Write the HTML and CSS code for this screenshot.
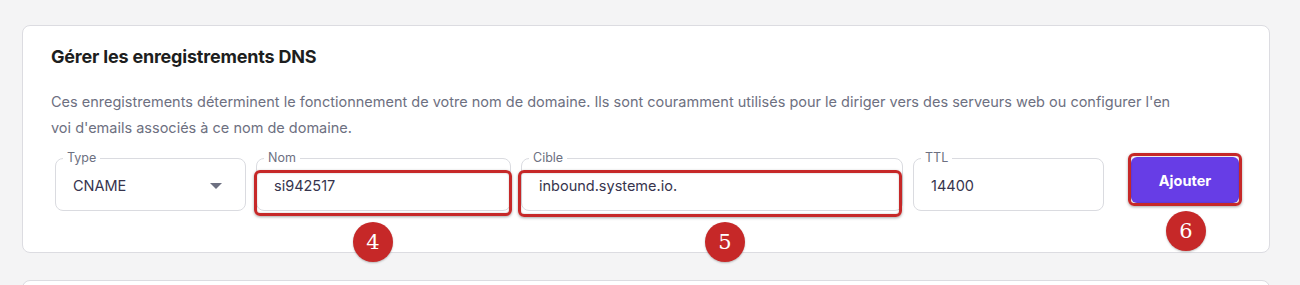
FILE: index.html
```html
<!DOCTYPE html>
<html lang="fr">
<head>
  <meta charset="UTF-8">
  <title>Gérer les enregistrements DNS</title>
  <link rel="stylesheet" href="styles.css">
</head>
<body>

<div class="page">
  <div class="card">
    <h2>Gérer les enregistrements DNS</h2>
    <p class="desc">Ces enregistrements déterminent le fonctionnement de votre nom de domaine. Ils sont couramment utilisés pour le diriger vers des serveurs web ou configurer l'en<br>voi d'emails associés à ce nom de domaine.</p>

    <div class="fields">
      <fieldset class="field field-type">
        <legend>Type</legend>
        <span class="value">CNAME</span>
        <span class="caret"></span>
      </fieldset>

      <fieldset class="field field-name">
        <legend>Nom</legend>
        <span class="value">si942517</span>
        <div class="mark mark-name"></div>
        <div class="step step-4">4</div>
      </fieldset>

      <fieldset class="field field-target">
        <legend>Cible</legend>
        <span class="value">inbound.systeme.io.</span>
        <div class="mark mark-target"></div>
        <div class="step step-5">5</div>
      </fieldset>

      <fieldset class="field field-ttl">
        <legend>TTL</legend>
        <span class="value">14400</span>
      </fieldset>

      <div class="btn-wrap">
        <button class="btn">Ajouter</button>
        <div class="mark mark-btn"></div>
        <div class="step step-6">6</div>
      </div>
    </div>
  </div>

  <div class="card card-next"></div>
</div>

</body>
</html>
```

FILE: styles.css
```css
body {
  margin: 0;
  font-family: Inter, "Noto Sans", sans-serif;
  background: #f4f4f5;
  color: #1d1e20;
}

.page {
  padding: 25px 30px 0 22px;
}

.card {
  background: #fff;
  border: 1px solid #dcdce1;
  border-radius: 8px;
  padding: 19px 28px 0;
  height: 207px;
}

.card-next {
  margin-top: 27px;
  height: 40px;
  padding: 0;
}

h2 {
  margin: 0;
  font-size: 18px;
  line-height: 24px;
  font-weight: 700;
  letter-spacing: -0.2px;
}

.desc {
  margin: 20px 0 0;
  font-size: 14.5px;
  line-height: 26px;
  color: #6d7081;
}

.fields {
  display: flex;
  align-items: flex-start;
  gap: 10px;
  margin-top: 11px;
  padding-left: 4px;
}

.field {
  position: relative;
  margin: 0;
  padding: 0 17px;
  height: 59px;
  border: 1px solid #dadbe0;
  border-radius: 8px;
  display: flex;
  align-items: center;
  box-sizing: border-box;
  min-width: 0;
}

.field legend {
  font-size: 12.5px;
  line-height: 12px;
  color: #6d7081;
  padding: 0 4px;
  margin-left: -10px;
}

.field-type { width: 191px; }
.field-name { width: 255px; }
.field-target { width: 382px; }
.field-ttl { width: 191px; }

.value {
  font-size: 14.5px;
  color: #36344d;
  margin-top: -3px;
}

.caret {
  margin-left: auto;
  margin-right: 6px;
  margin-top: -3px;
  width: 0;
  height: 0;
  border-left: 6px solid transparent;
  border-right: 6px solid transparent;
  border-top: 6px solid #6d7081;
}

.btn-wrap {
  position: relative;
  margin-left: 17px;
  margin-top: 5px;
}

.btn {
  display: block;
  width: 108px;
  height: 46px;
  border: none;
  border-radius: 6px;
  background: #673de6;
  color: #fff;
  font-family: Inter, "Noto Sans", sans-serif;
  font-size: 14.5px;
  font-weight: 700;
}

/* annotation overlays */
.mark {
  position: absolute;
  border: 3px solid #c62828;
  border-radius: 6px;
  box-shadow: 0 1px 3px rgba(0, 0, 0, 0.35), inset 0 0 2px rgba(0, 0, 0, 0.25);
  box-sizing: border-box;
  pointer-events: none;
}

.mark-name {
  left: -3px;
  top: 6px;
  width: 258px;
  height: 46px;
}

.mark-target {
  left: -4px;
  top: 6px;
  width: 384px;
  height: 47px;
}

.mark-btn {
  left: -3px;
  top: -4px;
  width: 114px;
  height: 53px;
}

.step {
  position: absolute;
  width: 40px;
  height: 40px;
  border-radius: 50%;
  background: #c62828;
  color: #fff;
  font-family: "DejaVu Serif", "Liberation Serif", serif;
  font-size: 21px;
  line-height: 40px;
  text-align: center;
  box-shadow: 0 1px 2px rgba(0, 0, 0, 0.25);
}

.step-4 { left: 96px; top: 58px; }
.step-5 { left: 183px; top: 58px; }
.step-6 { left: 35px; top: 54px; }
```
